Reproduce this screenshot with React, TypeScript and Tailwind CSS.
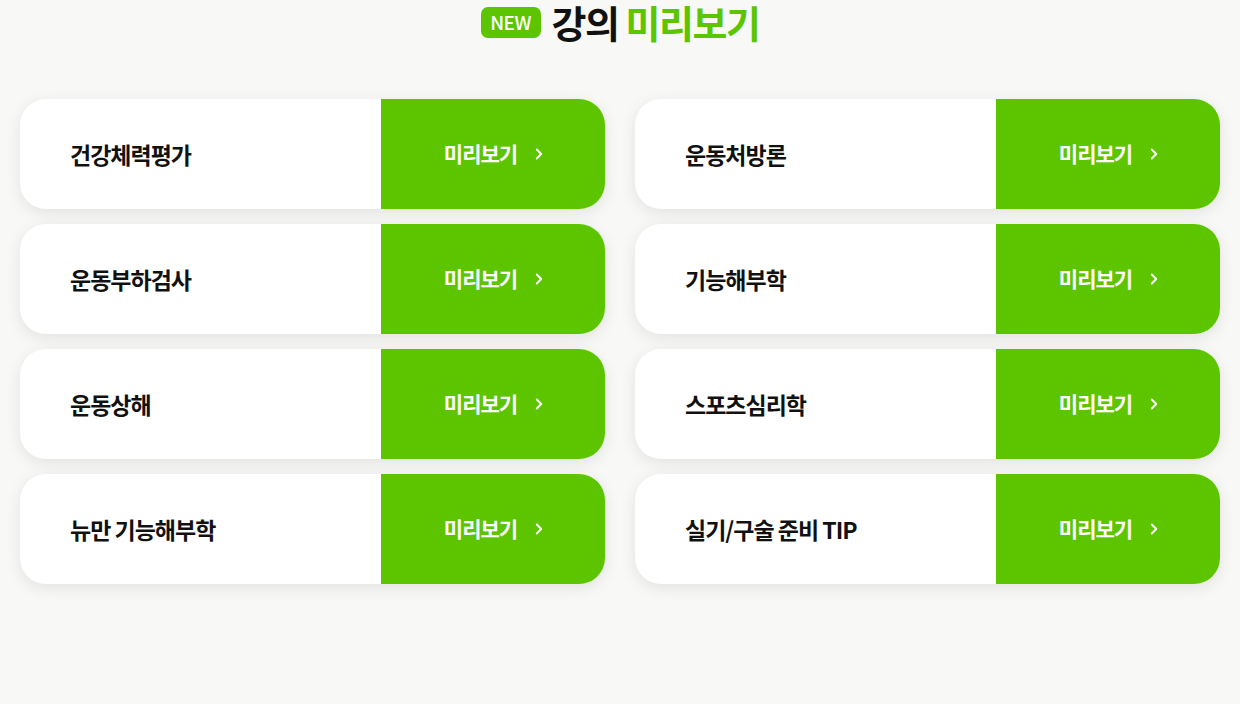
import { ChevronRight } from "lucide-react";

const lectures = [
  "건강체력평가",
  "운동처방론",
  "운동부하검사",
  "기능해부학",
  "운동상해",
  "스포츠심리학",
  "뉴만 기능해부학",
  "실기/구술 준비 TIP",
];

export default function App() {
  return (
    <div
      className="min-h-[704px] bg-[#f8f9f7] px-[20px]"
      style={{ fontFamily: '"Noto Sans CJK KR", "Noto Sans", sans-serif' }}
    >
      {/* Title */}
      <div className="flex h-[44px] items-center justify-center gap-[11px]">
        <span className="flex h-[31px] w-[60px] items-center justify-center rounded-[7px] bg-[#5cc500] text-[19px] font-medium tracking-[-0.5px] text-white">
          NEW
        </span>
        <h1 className="text-[38px] font-bold leading-[44px] tracking-[-1.5px] text-[#111]">
          강의 <span className="text-[#5cc500]">미리보기</span>
        </h1>
      </div>

      {/* Cards */}
      <div className="mt-[55px] grid grid-cols-2 gap-x-[30px] gap-y-[15px]">
        {lectures.map((title) => (
          <div
            key={title}
            className="flex h-[110px] overflow-hidden rounded-[26px] bg-white shadow-[0_4px_16px_rgba(0,0,0,0.09)]"
          >
            <div className="flex flex-1 items-center pl-[50px] text-[23px] font-bold tracking-[-1px] text-[#111]">
              {title}
            </div>
            <a
              href="#"
              className="flex w-[224px] items-center justify-center gap-[13px] bg-[#5cc500] pl-[6px] text-[21px] font-bold tracking-[-1px] text-white"
            >
              미리보기
              <ChevronRight size={18} strokeWidth={2.5} />
            </a>
          </div>
        ))}
      </div>
    </div>
  );
}
